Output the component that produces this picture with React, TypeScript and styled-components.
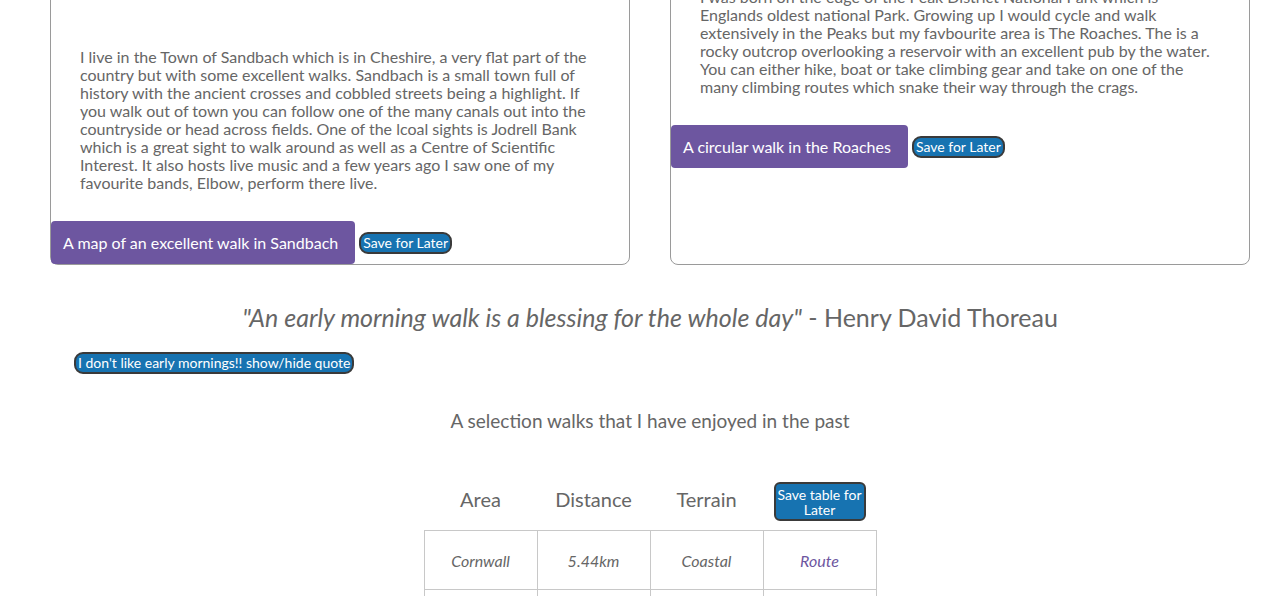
import React from "react";
import styled, { createGlobalStyle } from "styled-components";

const Global = createGlobalStyle`
  html, body { margin: 0; padding: 0; background: #fff; }
  body { font-family: Lato, "Open Sans", sans-serif; color: #666; overflow: hidden; }
`;

const Page = styled.main`
  width: 1200px;
  margin: 0 0 0 50px;
`;

const CardRow = styled.section`
  display: flex;
  gap: 40px;
  margin-top: -30px;
`;

const Card = styled.article`
  flex: 1;
  display: flex;
  flex-direction: column;
  border: 1px solid #9a9a9a;
  border-radius: 8px;
`;

const CardText = styled.p<{ $top: number }>`
  margin: ${(p) => p.$top}px 29px 0;
  font-size: 16px;
  line-height: 18px;
  font-weight: 400;
  color: #666;
  white-space: nowrap;
`;

const Actions = styled.div`
  display: flex;
  align-items: center;
  gap: 4px;
  margin-top: 29px;
`;

const MapLink = styled.a`
  display: inline-block;
  background: #6d56a0;
  color: #fff;
  font-size: 16px;
  line-height: 19px;
  padding: 12px 17px 12px 12px;
  border-radius: 4px;
  text-decoration: none;
`;

const PillButton = styled.button`
  font-family: Lato, "Open Sans", sans-serif;
  background: #1773b1;
  color: #fff;
  border: 2px solid #3a3a3a;
  border-radius: 9px;
  font-size: 14px;
  line-height: 16px;
  padding: 1px 2px;
  cursor: pointer;
  white-space: nowrap;
`;

const Quote = styled.blockquote`
  margin: 37px 0 0;
  text-align: center;
  font-size: 25px;
  line-height: 30px;
  color: #666;
`;

const QuoteText = styled.em`
  font-style: italic;
`;

const QuoteBar = styled.div`
  margin: 20px 0 0 24px;
`;

const Heading = styled.h3`
  margin: 35px 0 0;
  text-align: center;
  font-size: 19px;
  line-height: 24px;
  font-weight: 400;
  color: #666;
`;

const Table = styled.table`
  margin: 39px auto 0;
  border-collapse: collapse;
`;

const Th = styled.th`
  width: 112px;
  padding: 8px 0 12px;
  font-size: 20px;
  font-weight: 400;
  color: #666;
  text-align: center;
`;

const ButtonTh = styled(Th)`
  padding: 10px 0 9px;
`;

const Td = styled.td`
  width: 112px;
  height: 58px;
  padding: 0;
  border: 1px solid #c8c8c8;
  font-size: 16px;
  font-style: italic;
  text-align: center;
  color: #666;
`;

const RouteLink = styled.a`
  color: #6d56a0;
  text-decoration: none;
`;

const TableButton = styled(PillButton)`
  width: 92px;
  font-size: 14px;
  line-height: 15px;
  border-radius: 6px;
  padding: 3px 0 2px;
`;

const leftLines = [
  "I live in the Town of Sandbach which is in Cheshire, a very flat part of the",
  "country but with some excellent walks. Sandbach is a small town full of",
  "history with the ancient crosses and cobbled streets being a highlight. If",
  "you walk out of town you can follow one of the many canals out into the",
  "countryside or head across fields. One of the lcoal sights is Jodrell Bank",
  "which is a great sight to walk around as well as a Centre of Scientific",
  "Interest. It also hosts live music and a few years ago I saw one of my",
  "favourite bands, Elbow, perform there live.",
];

const rightLines = [
  "I was born on the edge of the Peak District National Park which is",
  "Englands oldest national Park. Growing up I would cycle and walk",
  "extensively in the Peaks but my favbourite area is The Roaches. The is a",
  "rocky outcrop overlooking a reservoir with an excellent pub by the water.",
  "You can either hike, boat or take climbing gear and take on one of the",
  "many climbing routes which snake their way through the crags.",
];

const Lines = ({ lines }: { lines: string[] }) => (
  <>
    {lines.map((l, i) => (
      <React.Fragment key={i}>
        {l}
        {i < lines.length - 1 && <br />}
      </React.Fragment>
    ))}
  </>
);

export default function App() {
  return (
    <>
      <Global />
      <Page>
        <CardRow>
          <Card>
            <CardText $top={77}>
              <Lines lines={leftLines} />
            </CardText>
            <Actions>
              <MapLink href="#">A map of an excellent walk in Sandbach</MapLink>
              <PillButton>Save for Later</PillButton>
            </Actions>
          </Card>
          <Card>
            <CardText $top={17}>
              <Lines lines={rightLines} />
            </CardText>
            <Actions>
              <MapLink href="#">A circular walk in the Roaches</MapLink>
              <PillButton>Save for Later</PillButton>
            </Actions>
          </Card>
        </CardRow>
        <Quote>
          <QuoteText>"An early morning walk is a blessing for the whole day"</QuoteText> - Henry David Thoreau
        </Quote>
        <QuoteBar>
          <PillButton>I don't like early mornings!! show/hide quote</PillButton>
        </QuoteBar>
        <Heading>A selection walks that I have enjoyed in the past</Heading>
        <Table>
          <thead>
            <tr>
              <Th>Area</Th>
              <Th>Distance</Th>
              <Th>Terrain</Th>
              <ButtonTh>
                <TableButton>
                  Save table for
                  <br />
                  Later
                </TableButton>
              </ButtonTh>
            </tr>
          </thead>
          <tbody>
            <tr>
              <Td>Cornwall</Td>
              <Td>5.44km</Td>
              <Td>Coastal</Td>
              <Td>
                <RouteLink href="#">Route</RouteLink>
              </Td>
            </tr>
            <tr>
              <Td>Peak District</Td>
              <Td>8.2km</Td>
              <Td>Hills</Td>
              <Td>
                <RouteLink href="#">Route</RouteLink>
              </Td>
            </tr>
          </tbody>
        </Table>
      </Page>
    </>
  );
}
